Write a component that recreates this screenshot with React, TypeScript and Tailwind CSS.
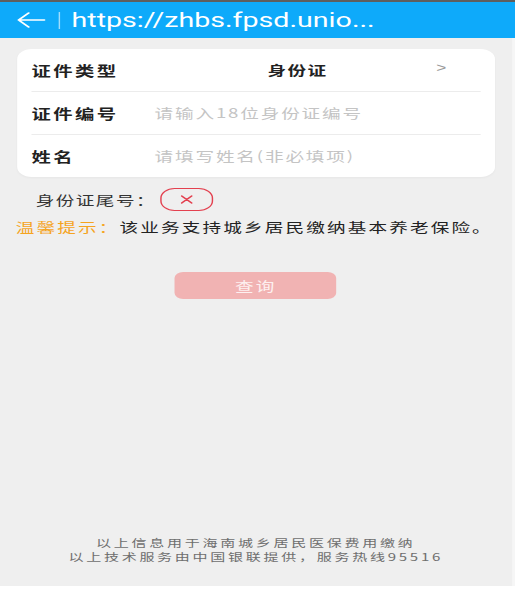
import React from "react";

const cjk = { fontFamily: '"Noto Sans CJK SC", "Noto Sans", sans-serif' };

function Row({ label, children }: { label: string; children?: React.ReactNode }) {
  return (
    <div className="flex h-[42px] items-center">
      <div className="w-[86px] text-[13.5px] font-bold tracking-[1.7px] text-[#222]">{label}</div>
      {children}
    </div>
  );
}

export default function App() {
  return (
    <div className="w-[515px] h-[589px] overflow-hidden bg-[#efefef]">
      <div
        className="w-[360px] h-[589px] origin-top-left scale-x-[1.4306] flex flex-col"
        style={cjk}
      >
        <div className="h-[2px] bg-[#5e5e5e]" />
        <div className="h-[36px] bg-[#0eaafa] flex items-center">
          <svg width="21" height="16" viewBox="0 0 21 16" className="ml-[11px]" fill="none">
            <path d="M20 8H2M9 1L2 8l7 7" stroke="white" strokeWidth="1.6" strokeLinecap="round" strokeLinejoin="round" />
          </svg>
          <div className="ml-[9px] h-[17px] w-px bg-white/60" />
          <div
            className="ml-[8px] text-[20px] leading-[36px] text-white"
            style={{ fontFamily: 'Roboto, "Liberation Sans", sans-serif' }}
          >
            https://zhbs.fpsd.unio...
          </div>
        </div>
        <div className="flex flex-1">
          <div className="flex flex-1 flex-col">
            <div className="mx-[12px] mt-[11px] rounded-[10px] bg-white px-[10px] shadow-[0_1px_2px_rgba(0,0,0,0.04)]">
              <Row label="证件类型">
                <span className="ml-[79px] text-[13px] font-semibold tracking-[1px] text-[#222]">身份证</span>
                <span
                  className="ml-[76px] -mt-[4px] text-[12px] text-[#9a9a9a]"
                  style={{ fontFamily: '"Liberation Sans", sans-serif' }}
                >
                  &gt;
                </span>
              </Row>
              <div className="h-px bg-[#ececec]" />
              <Row label="证件编号">
                <span className="text-[13px] tracking-[1.3px] text-[#c4c4c4]">请输入18位身份证编号</span>
              </Row>
              <div className="h-px bg-[#ececec]" />
              <Row label="姓名">
                <span className="text-[13px] tracking-[1.3px] text-[#c4c4c4]">请填写姓名(非必填项)</span>
              </Row>
            </div>
            <div className="mt-[11px] flex h-[23px] items-center pl-[25px]">
              <span className="text-[13px] tracking-[1px] text-[#333]">身份证尾号：</span>
              <div className="ml-[3px] flex h-[23px] w-[37px] items-center justify-center rounded-[10px] border border-[#e3404f]">
                <svg width="9" height="9" viewBox="0 0 9 9" fill="none">
                  <path d="M1 1l7 7M8 1L1 8" stroke="#e3404f" strokeWidth="1.2" strokeLinecap="round" />
                </svg>
              </div>
            </div>
            <div className="mt-[6px] flex h-[20px] items-center pl-[11px] text-[13px] tracking-[1.5px]">
              <span className="text-[#f5a41f]">温馨提示：</span>
              <span className="text-[#222]">该业务支持城乡居民缴纳基本养老保险。</span>
            </div>
            <div className="mt-[35px] flex justify-center">
              <div className="flex h-[27px] w-[113px] items-center justify-center rounded-[6px] bg-[#f1b3b3] text-[13px] tracking-[1.5px] text-[#fdf0f0]">
                查询
              </div>
            </div>
            <div className="mt-auto pb-[22px] text-center text-[10.5px] leading-[14px] tracking-[1.9px] text-[#6e6e6e]">
              <div>以上信息用于海南城乡居民医保费用缴纳</div>
              <div>以上技术服务由中国银联提供，服务热线95516</div>
            </div>
          </div>
          <div className="w-[2.5px] bg-[#f6f6f6]" />
        </div>
        <div className="h-[3px] bg-white" />
      </div>
    </div>
  );
}
